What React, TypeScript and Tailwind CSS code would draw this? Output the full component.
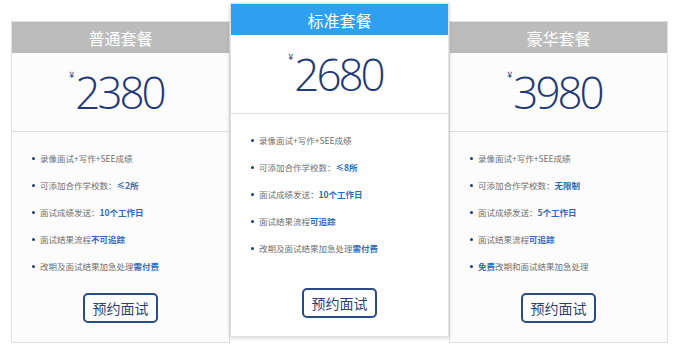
import React from 'react';

type Feature = { pre?: string; hl?: string; post?: string };

type Plan = {
  name: string;
  price: string;
  featured?: boolean;
  features: Feature[];
};

const plans: Plan[] = [
  {
    name: '普通套餐',
    price: '2380',
    features: [
      { pre: '录像面试+写作+SEE成绩' },
      { pre: '可添加合作学校数：', hl: '≤2所' },
      { pre: '面试成绩发送：', hl: '10个工作日' },
      { pre: '面试结果流程', hl: '不可追踪' },
      { pre: '改期及面试结果加急处理', hl: '需付费' },
    ],
  },
  {
    name: '标准套餐',
    price: '2680',
    featured: true,
    features: [
      { pre: '录像面试+写作+SEE成绩' },
      { pre: '可添加合作学校数：', hl: '≤8所' },
      { pre: '面试成绩发送：', hl: '10个工作日' },
      { pre: '面试结果流程', hl: '可追踪' },
      { pre: '改期及面试结果加急处理', hl: '需付费' },
    ],
  },
  {
    name: '豪华套餐',
    price: '3980',
    features: [
      { pre: '录像面试+写作+SEE成绩' },
      { pre: '可添加合作学校数：', hl: '无限制' },
      { pre: '面试成绩发送：', hl: '5个工作日' },
      { pre: '面试结果流程', hl: '可追踪' },
      { hl: '免费', post: '改期和面试结果加急处理' },
    ],
  },
];

const PlanCard: React.FC<{ plan: Plan }> = ({ plan }) => {
  const featured = plan.featured;
  return (
    <div
      className={
        featured
          ? 'w-[219px] bg-white border border-[#e2e2e2] shadow-[0_1px_4px_rgba(0,0,0,0.18)] relative z-10'
          : 'w-[219px] mt-[18px] bg-[#fcfcfc] border border-[#e0e0e0]'
      }
    >
      <div
        className={
          'h-[31px] flex items-center justify-center text-white text-[16px] ' +
          (featured ? 'bg-[#2f9ff0]' : 'bg-[#bcbcbc]')
        }
      >
        {plan.name}
      </div>
      <div className="h-[79px] border-b border-[#dcdcdc] flex items-center justify-center pr-[8px]">
        <span className="text-[#1e3a78] text-[9px] self-start mt-[15px] mr-[1px]">¥</span>
        <span className="text-[#1e3a78] text-[44px] font-light leading-none tracking-[-3px] [font-family:'Open_Sans',sans-serif]">
          {plan.price}
        </span>
      </div>
      <ul className="pt-[13px] pl-[20px]">
        {plan.features.map((f, i) => (
          <li key={i} className="h-[27px] flex items-center text-[8.5px] text-[#707070]">
            <span className="w-[3px] h-[3px] rounded-full bg-[#1e3a78] mr-[5px]" />
            {f.pre && <span>{f.pre}</span>}
            {f.hl && <span className="text-[#2f6ab8] font-bold">{f.hl}</span>}
            {f.post && <span>{f.post}</span>}
          </li>
        ))}
      </ul>
      <div className={'flex justify-center ' + (featured ? 'mt-[26px] pb-[18px]' : 'mt-[13px] pb-[19px]')}>
        <button className="w-[75px] h-[30px] border-2 border-[#2b4a86] rounded-[5px] text-[#2b3f6f] text-[14px] bg-white">
          预约面试
        </button>
      </div>
    </div>
  );
};

export default function App() {
  return (
    <div className="w-[679px] h-[345px] bg-white overflow-hidden [font-family:'Noto_Sans_CJK_SC','Noto_Sans',sans-serif]">
      <div className="flex items-start pl-[11px] pt-[3px]">
        {plans.map((p) => (
          <PlanCard key={p.name} plan={p} />
        ))}
      </div>
    </div>
  );
}
